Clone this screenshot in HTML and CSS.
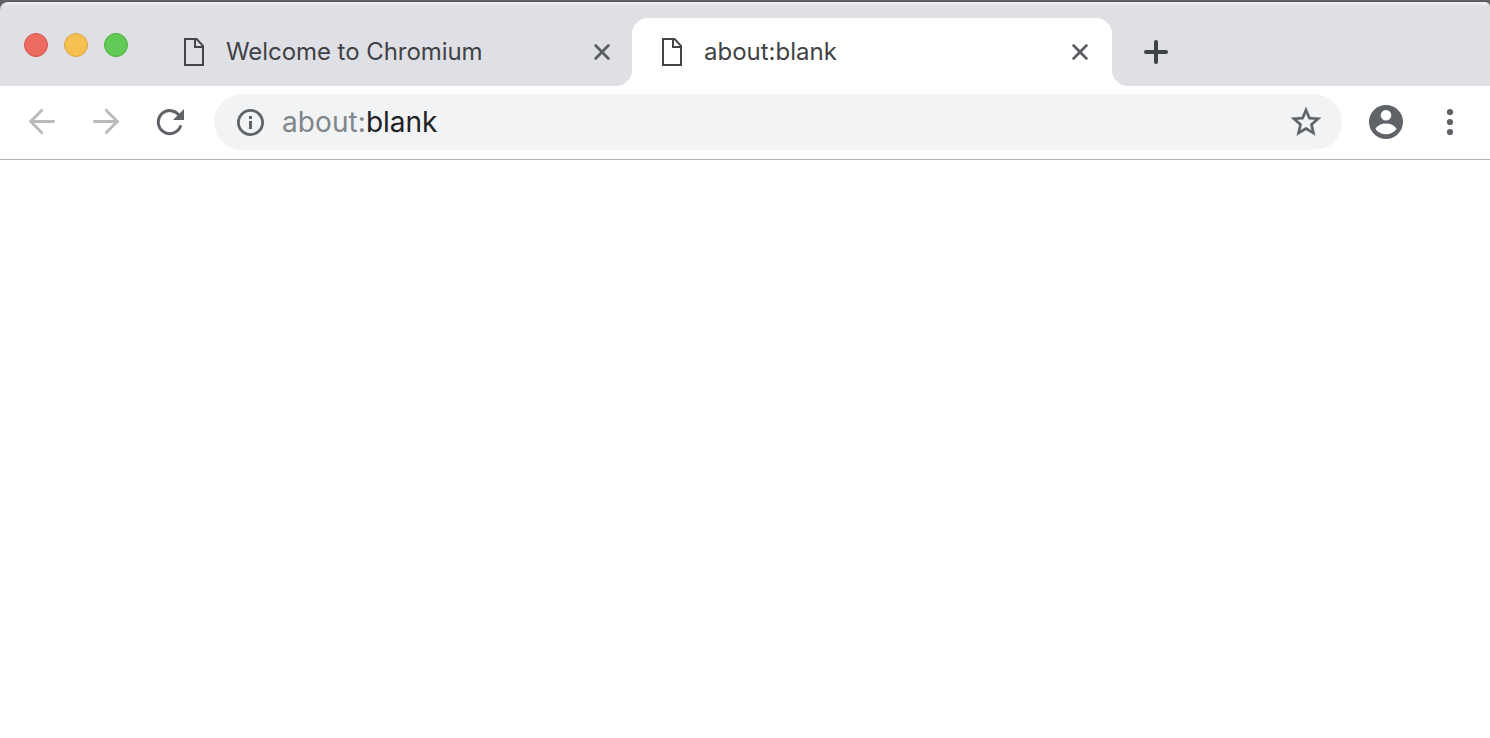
FILE: index.html
```html
<!DOCTYPE html>
<html lang="en">
<head>
<meta charset="utf-8">
<title>about:blank</title>
<link rel="stylesheet" href="styles.css">
</head>
<body>
<div class="window">
  <header class="tab-strip">
    <div class="lights">
      <span class="light light-close"></span>
      <span class="light light-minimize"></span>
      <span class="light light-zoom"></span>
    </div>
    <div class="tab">
      <svg class="page-icon" viewBox="0 0 20 28"><path d="M1 1h11.6L19 7.8V27H1zM11 1v8h8"/></svg>
      <span class="tab-title title-welcome">Welcome to Chromium</span>
      <svg class="close-icon" viewBox="0 0 18 18"><path d="M2.6 2.6l12.8 12.8M15.4 2.6L2.6 15.4"/></svg>
    </div>
    <div class="tab tab-active">
      <svg class="page-icon" viewBox="0 0 20 28"><path d="M1 1h11.6L19 7.8V27H1zM11 1v8h8"/></svg>
      <span class="tab-title">about:blank</span>
      <svg class="close-icon" viewBox="0 0 18 18"><path d="M2.6 2.6l12.8 12.8M15.4 2.6L2.6 15.4"/></svg>
    </div>
    <svg class="new-tab" viewBox="0 0 24 24"><path d="M12 2v20M2 12h20"/></svg>
  </header>
  <nav class="toolbar">
    <svg class="nav-icon" viewBox="0 0 28 28"><path d="M25.6 13.5H3.5M13.6 2.4L2.7 13.5l10.9 11.1"/></svg>
    <svg class="nav-icon" viewBox="0 0 28 28"><path d="M2.4 13.5h22M14.4 2.4L25.3 13.5 14.4 24.6"/></svg>
    <svg class="reload-icon" viewBox="0 0 28 28"><path class="arc" d="M23.2 7.5A11.5 11.5 0 1 0 24.4 18.5"/><path class="head" d="M28 1v11H17z"/></svg>
    <div class="omnibox">
      <svg class="info-icon" viewBox="0 0 28 28"><circle cx="14.5" cy="14.5" r="12.1"/><path d="M13 8h3v3h-3zM13 13h3v8h-3z"/></svg>
      <span class="url"><span class="scheme">about:</span>blank</span>
      <svg class="star-icon" viewBox="0 0 24 24"><path d="M22 9.24l-7.19-.62L12 2 9.19 8.63 2 9.24l5.46 4.73L5.82 21 12 17.27 18.18 21l-1.63-7.03L22 9.24zM12 15.4l-3.76 2.27 1-4.28-3.32-2.88 4.38-.38L12 6.1l1.71 4.04 4.38.38-3.32 2.88 1 4.28L12 15.4z"/></svg>
    </div>
    <svg class="avatar" viewBox="0 0 34 34"><circle class="disc" cx="17" cy="17" r="17"/><circle class="face" cx="17" cy="10.3" r="5.3"/><path class="face" d="M6.3 23.7C8.7 20.4 12.7 18.5 17 18.5s8.300 1.900 10.700 5.200C25.300 27.300 21.300 29.200 17 29.200S8.700 27.300 6.300 23.700z"/></svg>
    <svg class="menu-icon" viewBox="0 0 8 28"><circle cx="4" cy="4" r="3.1"/><circle cx="4" cy="14" r="3.1"/><circle cx="4" cy="24" r="3.1"/></svg>
  </nav>
  <main class="page"></main>
</div>
</body>
</html>
```
FILE: styles.css
```css
* { box-sizing: border-box; }
body { margin: 0; background: #636265; font-family: Inter, Roboto, sans-serif; }
svg { display: block; flex: none; }
.window {
  height: 738px;
  padding-top: 2px;
  display: flex;
  flex-direction: column;
  overflow: hidden;
}
.tab-strip {
  height: 84px;
  flex: none;
  display: flex;
  background: linear-gradient(#f0f0f2 0, #e3e4e8 2px, #dfe0e5 4px);
  border-top: 1px solid #f3f3f5;
  box-shadow: 0 -1px 0 #555457;
  border-radius: 8px 5px 0 0;
  padding-left: 24px;
}
.lights { display: flex; gap: 16px; width: 144px; padding-top: 30px; }
.light { width: 24px; height: 24px; border-radius: 50%; border: 1px solid; }
.light-close { background: #ed6b60; border-color: #d5544b; }
.light-minimize { background: #f5c04f; border-color: #d9a345; }
.light-zoom { background: #62c955; border-color: #4fae40; }
.tab {
  width: 464px;
  margin-top: 15px;
  height: 68px;
  display: flex;
  align-items: center;
  padding: 0 21px 0 16px;
}
.tab-active {
  width: 480px;
  padding: 0 23px 0 30px;
  background: #fff;
  border-radius: 16px 16px 0 0;
  position: relative;
}
/* Flared feet where the active tab meets the toolbar */
.tab-active::before, .tab-active::after {
  content: "";
  position: absolute;
  bottom: 0;
  width: 16px;
  height: 16px;
}
.tab-active::before { left: -16px; background: radial-gradient(circle at 0 0, transparent 15.5px, #fff 16.5px); }
.tab-active::after { right: -16px; background: radial-gradient(circle at 100% 0, transparent 15.5px, #fff 16.5px); }
.page-icon { width: 20px; height: 28px; fill: none; stroke: #454545; stroke-width: 2; }
.tab-title { flex: 1; margin-left: 22px; font-size: 24px; line-height: 30px; color: #3f4246; white-space: nowrap; }
.title-welcome { letter-spacing: -0.06px; }
.close-icon { width: 18px; height: 18px; fill: none; stroke: #5b5e62; stroke-width: 2.8; stroke-linecap: round; }
.new-tab { width: 24px; height: 24px; margin: 37px 0 0 32px; fill: none; stroke: #3f4246; stroke-width: 4; stroke-linecap: round; }
.toolbar {
  height: 74px;
  flex: none;
  display: flex;
  align-items: center;
  background: #fff;
  border-bottom: 1px solid #b4b4b5;
  padding: 0 36px 1px 28px;
}
.nav-icon { width: 28px; height: 28px; margin-right: 36px; fill: none; stroke: #bababc; stroke-width: 2.9; stroke-linecap: round; }
.reload-icon { width: 28px; height: 28px; }
.arc { fill: none; stroke: #5f6368; stroke-width: 3; stroke-linecap: round; }
.head { fill: #5f6368; }
.omnibox {
  width: 1128px;
  height: 56px;
  margin-left: 30px;
  border-radius: 28px;
  background: #f1f3f4;
  display: flex;
  align-items: center;
  padding: 0 18px 0 22px;
}
.info-icon { width: 28px; height: 28px; fill: #5f6368; }
.info-icon circle { fill: none; stroke: #5f6368; stroke-width: 2.8; }
.url { flex: 1; margin-left: 18px; font-size: 28px; line-height: 36px; color: #202124; }
.scheme { color: #80868b; letter-spacing: 0.08px; }
.star-icon { width: 36px; height: 36px; fill: #5f6368; stroke: #5f6368; stroke-width: 0.2; }
.avatar { width: 34px; height: 34px; margin: 0 43px 0 27px; }
.disc { fill: #5f6368; }
.face { fill: #fff; }
.menu-icon { width: 8px; height: 28px; fill: #5f6368; }
.page { flex: 1; background: #fff; }
```
